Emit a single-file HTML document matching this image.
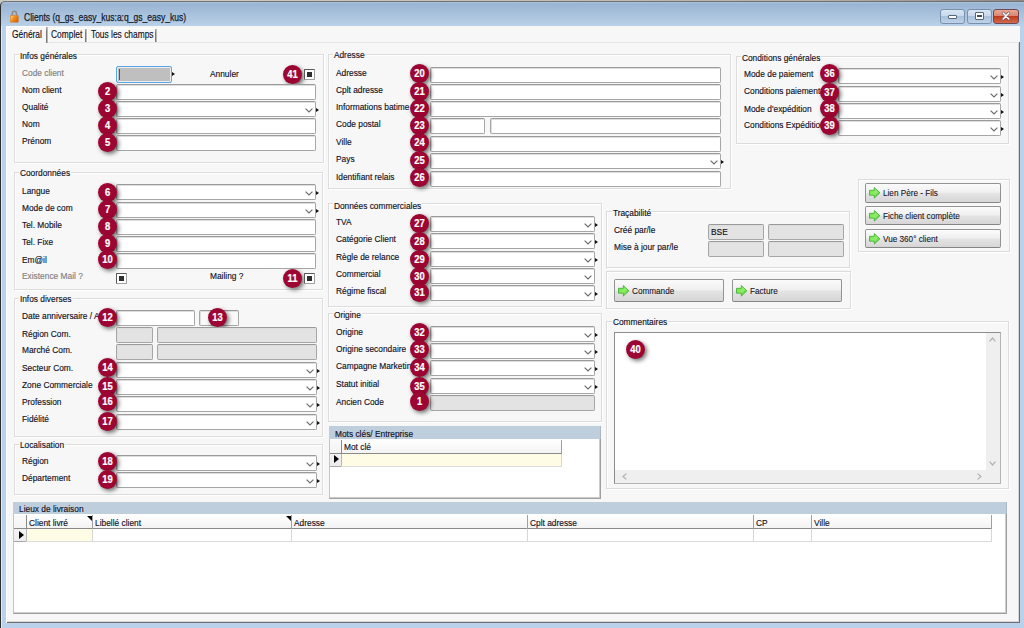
<!DOCTYPE html><html><head><meta charset="utf-8"><style>
*{margin:0;padding:0;box-sizing:border-box}
html,body{width:1024px;height:628px;overflow:hidden;background:#b9d1ea;font-family:"Liberation Sans",sans-serif}
#root{position:relative;width:1024px;height:628px;overflow:hidden}
.a{position:absolute}
.lbl,.gtit,.glbl{position:absolute;font-size:9.5px;line-height:11px;color:#101024;white-space:nowrap;transform-origin:0 0;transform:scaleX(0.88);-webkit-text-stroke:0.15px currentColor}
.gtit{background:#f7f7f7;padding:0 1px;margin-left:-1px}
.glbl{color:#7e7e7e}
.fld{position:absolute;background:#fff;border:1px solid #a6a6a6;border-top-color:#9a9a9a;border-radius:2px;box-shadow:inset 1px 1px 0 #dedede}
.fld.dis{background:#e3e3e3}
.chev{position:absolute;display:block;line-height:0}
.ptr{position:absolute;width:0;height:0;border-left:3px solid #111;border-top:2.5px solid transparent;border-bottom:2.5px solid transparent}
.bdg{position:absolute;width:19px;height:19px;border-radius:50%;background:#9d0632;box-shadow:2px 2px 4px rgba(0,0,0,.55);text-align:center}
.bdg span{display:block;font-weight:bold;font-size:10px;line-height:19px;color:#fff;transform:scaleX(0.94);-webkit-text-stroke:0.2px #fff}
.grp{position:absolute;border:1px solid #dcdcdc;box-shadow:inset 1px 1px 0 #fff, 1px 1px 0 #fff}
.chk{position:absolute;width:11px;height:10.5px;border:1px solid #5a5a5a;border-right-color:#a0a0a0;border-bottom-color:#a0a0a0;border-radius:1px;background:#fff}
.chk b{position:absolute;left:2px;top:2px;width:5px;height:5px;background:#2e2e2e}
.btn{position:absolute;border:1px solid #939393;border-bottom-color:#858585;border-radius:2px;background:linear-gradient(#fbfbfb 0%,#f0f0f0 45%,#e3e3e3 55%,#d6d6d6 100%)}
.btn .arr{position:absolute;left:3px;top:3px}
.btn span{position:absolute;left:17px;top:4px;font-size:9.5px;line-height:11px;color:#141428;white-space:nowrap;transform-origin:0 0;transform:scaleX(0.86);-webkit-text-stroke:0.1px currentColor}
.hdr{position:absolute;background:#bfcedd}
.ch{position:absolute;background:linear-gradient(#ffffff,#f3f3f3);border-bottom:1px solid #8a8a8a}
.tri{position:absolute;width:0;height:0;border-left:5px solid #000;border-top:4.5px solid transparent;border-bottom:4.5px solid transparent}
.sort{position:absolute;width:0;height:0;border-top:5px solid #000;border-left:5px solid transparent}
</style></head><body><div id="root"><div class="a" style="left:0px;top:0px;width:1024px;height:2px;background:linear-gradient(90deg,#d0d0cc,#c0c0bc 50%,#b0b0ac 80%,#8a8a8a)"></div>
<div class="a" style="left:0px;top:0px;width:6px;height:6px;background:#c8c8c4"></div>
<div class="a" style="left:0;top:1px;width:1040px;height:640px;border-top:1px solid #727272;border-left:1px solid #2e2e2e;border-top-left-radius:5px;background:linear-gradient(#aec3da 0px,#9ab5d3 2px,#b9d0e8 24px,#b9d1ea 24px)"></div>
<div class="a" style="left:1px;top:26px;width:1px;height:602px;background:#dfeaf6"></div>
<svg class="a" style="left:10px;top:10px" width="9" height="13" viewBox="0 0 9 13"><path d="M2.3 5.6 V3.4 A2.1 2.1 0 0 1 6.5 3.4 V5.6" fill="none" stroke="#8c8c8c" stroke-width="1.6"/><defs><linearGradient id="lk" x1="0" y1="0" x2="1" y2="0.6"><stop offset="0" stop-color="#f59a2a"/><stop offset="0.25" stop-color="#ffc25a"/><stop offset="0.4" stop-color="#f39a28"/><stop offset="1" stop-color="#d9650a"/></linearGradient></defs><rect x="0.3" y="5.4" width="8" height="6.8" rx="0.5" fill="url(#lk)" stroke="#d06a12" stroke-width="0.5"/></svg>
<div class="a" style="left:24px;top:11px;font-size:11px;line-height:13px;color:#141c2c;white-space:nowrap;transform-origin:0 0;transform:scaleX(0.775);-webkit-text-stroke:0.25px #141c2c">Clients (q_gs_easy_kus:a:q_gs_easy_kus)</div>
<div class="a" style="left:940px;top:9px;width:25px;height:15px;border:1px solid #7890aa;border-radius:3px;background:linear-gradient(#d8e5f3 0%,#c8d9ec 45%,#a8c1dd 50%,#bfd3ea 100%)"></div>
<div class="a" style="left:967px;top:9px;width:25px;height:15px;border:1px solid #7890aa;border-radius:3px;background:linear-gradient(#d8e5f3 0%,#c8d9ec 45%,#a8c1dd 50%,#bfd3ea 100%)"></div>
<div class="a" style="left:993px;top:9px;width:26px;height:15px;border:1px solid #6b4858;border-radius:3px;background:linear-gradient(#eaa897 0%,#dc8670 45%,#c13a1c 50%,#d36a4e 100%)"></div>
<div class="a" style="left:948px;top:15px;width:9px;height:4px;background:#fff;border:1px solid #55657a;border-radius:1px"></div>
<div class="a" style="left:975px;top:12px;width:9px;height:8px;background:#fff;border:1px solid #55657a;border-radius:1px"><div style="position:absolute;left:1px;top:2px;width:5px;height:2px;background:#3d4e66"></div></div>
<svg class="a" style="left:1000px;top:11px" width="12" height="10" viewBox="0 0 12 10"><path d="M3.2 2 L8.8 8 M8.8 2 L3.2 8" stroke="#7a5a66" stroke-width="2.8" stroke-linecap="round"/><path d="M3.2 2 L8.8 8 M8.8 2 L3.2 8" stroke="#fff" stroke-width="1.5" stroke-linecap="round"/></svg>
<div class="a" style="left:6px;top:26px;width:1014px;height:597px;background:#f7f7f7"></div>
<div class="a" style="left:48px;top:42px;width:971px;height:1px;background:#e6e6e6"></div>
<div class="a" style="left:1019px;top:42px;width:1px;height:581px;background:#6e6e6e"></div>
<div class="a" style="left:1018px;top:43px;width:1px;height:579px;background:#d6d6d6"></div>
<div class="a" style="left:6px;top:622px;width:1014px;height:1px;background:#6e6e6e"></div>
<div class="a" style="left:7px;top:621px;width:1012px;height:1px;background:#d6d6d6"></div>
<div class="a" style="left:6px;top:26px;width:1px;height:597px;background:#fff"></div>
<div class="a" style="left:6px;top:26px;width:41px;height:1px;background:#fff"></div>
<div class="a" style="left:46px;top:27px;width:1px;height:16px;background:linear-gradient(#b0b0b0,#7a7a7a 30%,#7a7a7a)"></div>
<div class="a" style="left:47px;top:27px;width:1px;height:16px;background:#b8b8b8"></div>
<div class="a" style="left:48px;top:28px;width:1px;height:14px;background:#fff"></div>
<div class="a" style="left:48px;top:28px;width:108px;height:1px;background:#fff"></div>
<div class="a" style="left:85px;top:29px;width:1px;height:13px;background:linear-gradient(#b0b0b0,#7a7a7a 30%,#7a7a7a)"></div>
<div class="a" style="left:86px;top:29px;width:1px;height:13px;background:#b8b8b8"></div>
<div class="a" style="left:87px;top:29px;width:1px;height:13px;background:#fff"></div>
<div class="a" style="left:155px;top:29px;width:1px;height:13px;background:linear-gradient(#b0b0b0,#7a7a7a 30%,#7a7a7a)"></div>
<div class="a" style="left:156px;top:29px;width:1px;height:13px;background:#b8b8b8"></div>
<div class="lbl" style="left:12px;top:29px;font-size:10px;transform:scaleX(0.84)">Général</div>
<div class="lbl" style="left:51px;top:29px;font-size:10px;transform:scaleX(0.84)">Complet</div>
<div class="lbl" style="left:91px;top:29px;font-size:10px;transform:scaleX(0.84)">Tous les champs</div>
<div class="grp" style="left:14px;top:54px;width:310px;height:109px"></div>
<div class="gtit" style="left:20px;top:50px;">Infos générales</div>
<div class="glbl" style="left:22px;top:67px;">Code client</div>
<div class="a" style="left:116px;top:66px;width:56px;height:17px;border:1px solid #5aa8e8;border-radius:2px;background:#bfbfbf;box-shadow:inset 0 0 0 1px #ececec"><div style="position:absolute;left:2px;top:2px;width:1px;height:11px;background:#555"></div></div>
<div class="ptr" style="left:172px;top:72px"></div>
<div class="lbl" style="left:210px;top:68px;">Annuler</div>
<div class="bdg" style="left:282.7px;top:64.7px"><span>41</span></div>
<div class="chk" style="left:304px;top:69px"><b></b></div>
<div class="lbl" style="left:22px;top:84px;">Nom client</div>
<div class="fld" style="left:116px;top:84px;width:200px;height:16px;"></div>
<div class="bdg" style="left:97.8px;top:82.3px"><span>2</span></div>
<div class="lbl" style="left:22px;top:101px;">Qualité</div>
<div class="fld" style="left:116px;top:101px;width:200px;height:16px"><i class="chev" style="left:187.5px;top:5.5px"><svg width="8" height="5" viewBox="0 0 8 5"><path d="M0.6 0.6 L4 4 L7.4 0.6" fill="none" stroke="#6a6a6a" stroke-width="1.15"/></svg></i></div>
<div class="ptr" style="left:316px;top:107.5px"></div>
<div class="bdg" style="left:97.8px;top:99.2px"><span>3</span></div>
<div class="lbl" style="left:22px;top:118px;">Nom</div>
<div class="fld" style="left:116px;top:118px;width:200px;height:16px;"></div>
<div class="bdg" style="left:97.8px;top:116.2px"><span>4</span></div>
<div class="lbl" style="left:22px;top:135px;">Prénom</div>
<div class="fld" style="left:116px;top:135px;width:200px;height:16px;"></div>
<div class="bdg" style="left:97.8px;top:133.3px"><span>5</span></div>
<div class="grp" style="left:14px;top:172px;width:309px;height:118px"></div>
<div class="gtit" style="left:20px;top:167px;">Coordonnées</div>
<div class="lbl" style="left:22px;top:185px;">Langue</div>
<div class="fld" style="left:116px;top:184px;width:200px;height:16px"><i class="chev" style="left:187.5px;top:5.5px"><svg width="8" height="5" viewBox="0 0 8 5"><path d="M0.6 0.6 L4 4 L7.4 0.6" fill="none" stroke="#6a6a6a" stroke-width="1.15"/></svg></i></div>
<div class="ptr" style="left:316px;top:190.5px"></div>
<div class="bdg" style="left:97.8px;top:182.5px"><span>6</span></div>
<div class="lbl" style="left:22px;top:202px;">Mode de com</div>
<div class="fld" style="left:116px;top:202px;width:200px;height:16px"><i class="chev" style="left:187.5px;top:5.5px"><svg width="8" height="5" viewBox="0 0 8 5"><path d="M0.6 0.6 L4 4 L7.4 0.6" fill="none" stroke="#6a6a6a" stroke-width="1.15"/></svg></i></div>
<div class="ptr" style="left:316px;top:208.5px"></div>
<div class="bdg" style="left:97.8px;top:200px"><span>7</span></div>
<div class="lbl" style="left:22px;top:219px;">Tel. Mobile</div>
<div class="fld" style="left:116px;top:219px;width:200px;height:16px;"></div>
<div class="bdg" style="left:97.8px;top:217px"><span>8</span></div>
<div class="lbl" style="left:22px;top:236px;">Tel. Fixe</div>
<div class="fld" style="left:116px;top:236px;width:200px;height:16px;"></div>
<div class="bdg" style="left:97.8px;top:233.5px"><span>9</span></div>
<div class="lbl" style="left:22px;top:254px;">Em@il</div>
<div class="fld" style="left:116px;top:253px;width:200px;height:16px;"></div>
<div class="bdg" style="left:97.8px;top:250.3px"><span>10</span></div>
<div class="glbl" style="left:22px;top:270px;">Existence Mail ?</div>
<div class="chk" style="left:116px;top:273px"><b></b></div>
<div class="lbl" style="left:210px;top:270px;">Mailing ?</div>
<div class="bdg" style="left:282.7px;top:268.7px"><span>11</span></div>
<div class="chk" style="left:304px;top:273px"><b></b></div>
<div class="grp" style="left:14px;top:298px;width:309px;height:139px"></div>
<div class="gtit" style="left:20px;top:293px;">Infos diverses</div>
<div class="lbl" style="left:22px;top:310px;">Date anniversaire / A</div>
<div class="fld" style="left:116px;top:310px;width:79px;height:16px;"></div>
<div class="fld" style="left:199px;top:310px;width:40px;height:16px;background:#f9f9f9"></div>
<div class="bdg" style="left:97.8px;top:307.7px"><span>12</span></div>
<div class="bdg" style="left:207.5px;top:307.7px"><span>13</span></div>
<div class="lbl" style="left:22px;top:328px;">Région Com.</div>
<div class="fld dis" style="left:116px;top:327px;width:37px;height:16px;"></div>
<div class="fld dis" style="left:157px;top:327px;width:160px;height:16px;"></div>
<div class="lbl" style="left:22px;top:344px;">Marché Com.</div>
<div class="fld dis" style="left:116px;top:344px;width:37px;height:16px;"></div>
<div class="fld dis" style="left:157px;top:344px;width:160px;height:16px;"></div>
<div class="lbl" style="left:22px;top:362px;">Secteur Com.</div>
<div class="fld" style="left:116px;top:362px;width:201px;height:16px"><i class="chev" style="left:188.5px;top:5.5px"><svg width="8" height="5" viewBox="0 0 8 5"><path d="M0.6 0.6 L4 4 L7.4 0.6" fill="none" stroke="#6a6a6a" stroke-width="1.15"/></svg></i></div>
<div class="ptr" style="left:317px;top:368.5px"></div>
<div class="bdg" style="left:97.8px;top:358.3px"><span>14</span></div>
<div class="lbl" style="left:22px;top:379px;">Zone Commerciale</div>
<div class="fld" style="left:116px;top:379px;width:201px;height:16px"><i class="chev" style="left:188.5px;top:5.5px"><svg width="8" height="5" viewBox="0 0 8 5"><path d="M0.6 0.6 L4 4 L7.4 0.6" fill="none" stroke="#6a6a6a" stroke-width="1.15"/></svg></i></div>
<div class="ptr" style="left:317px;top:385.5px"></div>
<div class="bdg" style="left:97.8px;top:377px"><span>15</span></div>
<div class="lbl" style="left:22px;top:396px;">Profession</div>
<div class="fld" style="left:116px;top:396px;width:201px;height:16px"><i class="chev" style="left:188.5px;top:5.5px"><svg width="8" height="5" viewBox="0 0 8 5"><path d="M0.6 0.6 L4 4 L7.4 0.6" fill="none" stroke="#6a6a6a" stroke-width="1.15"/></svg></i></div>
<div class="ptr" style="left:317px;top:402.5px"></div>
<div class="bdg" style="left:97.8px;top:392.1px"><span>16</span></div>
<div class="lbl" style="left:22px;top:413px;">Fidélité</div>
<div class="fld" style="left:116px;top:414px;width:201px;height:16px"><i class="chev" style="left:188.5px;top:5.5px"><svg width="8" height="5" viewBox="0 0 8 5"><path d="M0.6 0.6 L4 4 L7.4 0.6" fill="none" stroke="#6a6a6a" stroke-width="1.15"/></svg></i></div>
<div class="ptr" style="left:317px;top:420.5px"></div>
<div class="bdg" style="left:97.8px;top:412px"><span>17</span></div>
<div class="grp" style="left:14px;top:444px;width:309px;height:51px"></div>
<div class="gtit" style="left:20px;top:439px;">Localisation</div>
<div class="lbl" style="left:22px;top:455px;">Région</div>
<div class="fld" style="left:116px;top:455px;width:201px;height:16px"><i class="chev" style="left:188.5px;top:5.5px"><svg width="8" height="5" viewBox="0 0 8 5"><path d="M0.6 0.6 L4 4 L7.4 0.6" fill="none" stroke="#6a6a6a" stroke-width="1.15"/></svg></i></div>
<div class="ptr" style="left:317px;top:461.5px"></div>
<div class="bdg" style="left:97.8px;top:452.1px"><span>18</span></div>
<div class="lbl" style="left:22px;top:472px;">Département</div>
<div class="fld" style="left:116px;top:472px;width:201px;height:16px"><i class="chev" style="left:188.5px;top:5.5px"><svg width="8" height="5" viewBox="0 0 8 5"><path d="M0.6 0.6 L4 4 L7.4 0.6" fill="none" stroke="#6a6a6a" stroke-width="1.15"/></svg></i></div>
<div class="ptr" style="left:317px;top:478.5px"></div>
<div class="bdg" style="left:97.8px;top:469.5px"><span>19</span></div>
<div class="grp" style="left:328px;top:54px;width:403px;height:135px"></div>
<div class="gtit" style="left:334px;top:49px;">Adresse</div>
<div class="lbl" style="left:335.5px;top:67px;">Adresse</div>
<div class="fld" style="left:430px;top:67px;width:291px;height:16px;"></div>
<div class="bdg" style="left:410px;top:64.3px"><span>20</span></div>
<div class="lbl" style="left:335.5px;top:84px;">Cplt adresse</div>
<div class="fld" style="left:430px;top:84px;width:291px;height:16px;"></div>
<div class="bdg" style="left:410px;top:82.3px"><span>21</span></div>
<div class="lbl" style="left:335.5px;top:101px;">Informations batime</div>
<div class="fld" style="left:430px;top:101px;width:291px;height:16px;"></div>
<div class="bdg" style="left:410px;top:98.8px"><span>22</span></div>
<div class="lbl" style="left:335.5px;top:118px;">Code postal</div>
<div class="fld" style="left:430px;top:118px;width:55px;height:16px;"></div>
<div class="fld" style="left:490px;top:118px;width:231px;height:16px;"></div>
<div class="bdg" style="left:410px;top:115.5px"><span>23</span></div>
<div class="lbl" style="left:335.5px;top:136px;">Ville</div>
<div class="fld" style="left:430px;top:136px;width:291px;height:16px;"></div>
<div class="bdg" style="left:410px;top:133px"><span>24</span></div>
<div class="lbl" style="left:335.5px;top:153px;">Pays</div>
<div class="fld" style="left:430px;top:153px;width:291px;height:16px"><i class="chev" style="left:278.5px;top:5.5px"><svg width="8" height="5" viewBox="0 0 8 5"><path d="M0.6 0.6 L4 4 L7.4 0.6" fill="none" stroke="#6a6a6a" stroke-width="1.15"/></svg></i></div>
<div class="ptr" style="left:721px;top:159.5px"></div>
<div class="bdg" style="left:410px;top:151.3px"><span>25</span></div>
<div class="lbl" style="left:335.5px;top:171px;">Identifiant relais</div>
<div class="fld" style="left:430px;top:171px;width:291px;height:16px;"></div>
<div class="bdg" style="left:410px;top:167.5px"><span>26</span></div>
<div class="grp" style="left:328px;top:203px;width:274px;height:104px"></div>
<div class="gtit" style="left:334px;top:200px;">Données commerciales</div>
<div class="lbl" style="left:335.5px;top:216px;">TVA</div>
<div class="fld" style="left:430px;top:216px;width:165px;height:16px"><i class="chev" style="left:152.5px;top:5.5px"><svg width="8" height="5" viewBox="0 0 8 5"><path d="M0.6 0.6 L4 4 L7.4 0.6" fill="none" stroke="#6a6a6a" stroke-width="1.15"/></svg></i></div>
<div class="ptr" style="left:595px;top:222.5px"></div>
<div class="bdg" style="left:410px;top:213.5px"><span>27</span></div>
<div class="lbl" style="left:335.5px;top:233px;">Catégorie Client</div>
<div class="fld" style="left:430px;top:233px;width:165px;height:16px"><i class="chev" style="left:152.5px;top:5.5px"><svg width="8" height="5" viewBox="0 0 8 5"><path d="M0.6 0.6 L4 4 L7.4 0.6" fill="none" stroke="#6a6a6a" stroke-width="1.15"/></svg></i></div>
<div class="ptr" style="left:595px;top:239.5px"></div>
<div class="bdg" style="left:410px;top:232px"><span>28</span></div>
<div class="lbl" style="left:335.5px;top:251px;">Règle de relance</div>
<div class="fld" style="left:430px;top:251px;width:165px;height:16px"><i class="chev" style="left:152.5px;top:5.5px"><svg width="8" height="5" viewBox="0 0 8 5"><path d="M0.6 0.6 L4 4 L7.4 0.6" fill="none" stroke="#6a6a6a" stroke-width="1.15"/></svg></i></div>
<div class="ptr" style="left:595px;top:257.5px"></div>
<div class="bdg" style="left:410px;top:249.5px"><span>29</span></div>
<div class="lbl" style="left:335.5px;top:268px;">Commercial</div>
<div class="fld" style="left:430px;top:268px;width:165px;height:16px"><i class="chev" style="left:152.5px;top:5.5px"><svg width="8" height="5" viewBox="0 0 8 5"><path d="M0.6 0.6 L4 4 L7.4 0.6" fill="none" stroke="#6a6a6a" stroke-width="1.15"/></svg></i></div>
<div class="bdg" style="left:410px;top:267px"><span>30</span></div>
<div class="lbl" style="left:335.5px;top:285px;">Régime fiscal</div>
<div class="fld" style="left:430px;top:285px;width:165px;height:16px"><i class="chev" style="left:152.5px;top:5.5px"><svg width="8" height="5" viewBox="0 0 8 5"><path d="M0.6 0.6 L4 4 L7.4 0.6" fill="none" stroke="#6a6a6a" stroke-width="1.15"/></svg></i></div>
<div class="ptr" style="left:595px;top:291.5px"></div>
<div class="bdg" style="left:410px;top:283px"><span>31</span></div>
<div class="grp" style="left:328px;top:313px;width:274px;height:109px"></div>
<div class="gtit" style="left:334px;top:309px;">Origine</div>
<div class="lbl" style="left:335.5px;top:326px;">Origine</div>
<div class="fld" style="left:430px;top:326px;width:165px;height:16px"><i class="chev" style="left:152.5px;top:5.5px"><svg width="8" height="5" viewBox="0 0 8 5"><path d="M0.6 0.6 L4 4 L7.4 0.6" fill="none" stroke="#6a6a6a" stroke-width="1.15"/></svg></i></div>
<div class="ptr" style="left:595px;top:332.5px"></div>
<div class="bdg" style="left:410px;top:323.3px"><span>32</span></div>
<div class="lbl" style="left:335.5px;top:343px;">Origine secondaire</div>
<div class="fld" style="left:430px;top:343px;width:165px;height:16px"><i class="chev" style="left:152.5px;top:5.5px"><svg width="8" height="5" viewBox="0 0 8 5"><path d="M0.6 0.6 L4 4 L7.4 0.6" fill="none" stroke="#6a6a6a" stroke-width="1.15"/></svg></i></div>
<div class="ptr" style="left:595px;top:349.5px"></div>
<div class="bdg" style="left:410px;top:339.7px"><span>33</span></div>
<div class="lbl" style="left:335.5px;top:360px;">Campagne Marketin</div>
<div class="fld" style="left:430px;top:360px;width:165px;height:16px"><i class="chev" style="left:152.5px;top:5.5px"><svg width="8" height="5" viewBox="0 0 8 5"><path d="M0.6 0.6 L4 4 L7.4 0.6" fill="none" stroke="#6a6a6a" stroke-width="1.15"/></svg></i></div>
<div class="ptr" style="left:595px;top:366.5px"></div>
<div class="bdg" style="left:410px;top:358.1px"><span>34</span></div>
<div class="lbl" style="left:335.5px;top:378px;">Statut initial</div>
<div class="fld" style="left:430px;top:378px;width:165px;height:16px"><i class="chev" style="left:152.5px;top:5.5px"><svg width="8" height="5" viewBox="0 0 8 5"><path d="M0.6 0.6 L4 4 L7.4 0.6" fill="none" stroke="#6a6a6a" stroke-width="1.15"/></svg></i></div>
<div class="ptr" style="left:595px;top:384.5px"></div>
<div class="bdg" style="left:410px;top:376.9px"><span>35</span></div>
<div class="lbl" style="left:335.5px;top:396px;">Ancien Code</div>
<div class="fld dis" style="left:430px;top:395px;width:165px;height:16px;"></div>
<div class="bdg" style="left:410px;top:392.1px"><span>1</span></div>
<div class="hdr" style="left:329px;top:426px;width:272px;height:13px"></div>
<div class="lbl" style="left:334.5px;top:428px;">Mots clés/ Entreprise</div>
<div class="a" style="left:329px;top:439px;width:272px;height:60px;background:#fff;border:1px solid #c4c4c4;border-top:none;border-right-color:#a0a0a0;border-bottom-color:#a0a0a0;box-shadow:inset -1px -1px 0 #cdcdcd"></div>
<div class="a" style="left:600px;top:426px;width:1px;height:13px;background:#a9b6c4"></div>
<div class="ch" style="left:330px;top:440px;width:232px;height:14px"></div>
<div class="a" style="left:330px;top:440px;width:11px;height:26px;background:linear-gradient(#fafafa,#ececec)"></div>
<div class="a" style="left:330px;top:453px;width:11px;height:1px;background:#8a8a8a"></div>
<div class="a" style="left:341px;top:440px;width:1px;height:14px;background:#8a8a8a"></div>
<div class="a" style="left:341px;top:454px;width:1px;height:12px;background:#b8b8b8"></div>
<div class="a" style="left:561px;top:440px;width:1px;height:14px;background:#a0a0a0"></div>
<div class="a" style="left:561px;top:454px;width:1px;height:13px;background:#d6d6d6"></div>
<div class="lbl" style="left:344px;top:441px;">Mot clé</div>
<div class="a" style="left:342px;top:454px;width:219px;height:12px;background:#fefce4"></div>
<div class="a" style="left:330px;top:466px;width:232px;height:1px;background:#dcdcdc"></div>
<div class="a" style="left:330px;top:466px;width:11px;height:1px;background:#a8a8a8"></div>
<div class="tri" style="left:334px;top:455px"></div>
<div class="grp" style="left:606px;top:211px;width:244px;height:57px"></div>
<div class="gtit" style="left:613px;top:207px;">Traçabilité</div>
<div class="lbl" style="left:614px;top:224px;">Créé par/le</div>
<div class="fld dis" style="left:708px;top:224px;width:56px;height:16px;"></div>
<div class="fld dis" style="left:768px;top:224px;width:76px;height:16px;"></div>
<div class="lbl" style="left:711.2px;top:226px;">BSE</div>
<div class="lbl" style="left:614px;top:241px;">Mise à jour par/le</div>
<div class="fld dis" style="left:708px;top:241px;width:56px;height:16px;"></div>
<div class="fld dis" style="left:768px;top:241px;width:76px;height:16px;"></div>
<div class="grp" style="left:606px;top:271px;width:245px;height:38px"></div>
<div class="btn" style="left:614px;top:279px;width:110px;height:23px"><svg class="arr" style="top:5px" width="12" height="12" viewBox="0 0 12 12"><defs><linearGradient id="ga" x1="0" y1="0" x2="1" y2="1"><stop offset="0" stop-color="#6fdc4a"/><stop offset="0.55" stop-color="#8cf066"/><stop offset="1" stop-color="#34b024"/></linearGradient></defs><path d="M0.5 3.3 H5.3 V0.5 L10.9 5.8 L5.3 11.1 V8.2 H0.5 Z" fill="url(#ga)" stroke="#2ca41c" stroke-width="0.7" stroke-linejoin="round"/></svg><span style="top:4.5px">Commande</span></div>
<div class="btn" style="left:732px;top:279px;width:110px;height:23px"><svg class="arr" style="top:5px" width="12" height="12" viewBox="0 0 12 12"><defs><linearGradient id="ga" x1="0" y1="0" x2="1" y2="1"><stop offset="0" stop-color="#6fdc4a"/><stop offset="0.55" stop-color="#8cf066"/><stop offset="1" stop-color="#34b024"/></linearGradient></defs><path d="M0.5 3.3 H5.3 V0.5 L10.9 5.8 L5.3 11.1 V8.2 H0.5 Z" fill="url(#ga)" stroke="#2ca41c" stroke-width="0.7" stroke-linejoin="round"/></svg><span style="top:4.5px">Facture</span></div>
<div class="grp" style="left:858px;top:179px;width:152px;height:73px"></div>
<div class="btn" style="left:865px;top:183px;width:136px;height:20px"><svg class="arr" style="top:3px" width="12" height="12" viewBox="0 0 12 12"><defs><linearGradient id="ga" x1="0" y1="0" x2="1" y2="1"><stop offset="0" stop-color="#6fdc4a"/><stop offset="0.55" stop-color="#8cf066"/><stop offset="1" stop-color="#34b024"/></linearGradient></defs><path d="M0.5 3.3 H5.3 V0.5 L10.9 5.8 L5.3 11.1 V8.2 H0.5 Z" fill="url(#ga)" stroke="#2ca41c" stroke-width="0.7" stroke-linejoin="round"/></svg><span style="top:3px">Lien Père - Fils</span></div>
<div class="btn" style="left:865px;top:206px;width:136px;height:19px"><svg class="arr" style="top:3px" width="12" height="12" viewBox="0 0 12 12"><defs><linearGradient id="ga" x1="0" y1="0" x2="1" y2="1"><stop offset="0" stop-color="#6fdc4a"/><stop offset="0.55" stop-color="#8cf066"/><stop offset="1" stop-color="#34b024"/></linearGradient></defs><path d="M0.5 3.3 H5.3 V0.5 L10.9 5.8 L5.3 11.1 V8.2 H0.5 Z" fill="url(#ga)" stroke="#2ca41c" stroke-width="0.7" stroke-linejoin="round"/></svg><span style="top:3px">Fiche client complète</span></div>
<div class="btn" style="left:865px;top:229px;width:136px;height:19px"><svg class="arr" style="top:3px" width="12" height="12" viewBox="0 0 12 12"><defs><linearGradient id="ga" x1="0" y1="0" x2="1" y2="1"><stop offset="0" stop-color="#6fdc4a"/><stop offset="0.55" stop-color="#8cf066"/><stop offset="1" stop-color="#34b024"/></linearGradient></defs><path d="M0.5 3.3 H5.3 V0.5 L10.9 5.8 L5.3 11.1 V8.2 H0.5 Z" fill="url(#ga)" stroke="#2ca41c" stroke-width="0.7" stroke-linejoin="round"/></svg><span style="top:3px">Vue 360° client</span></div>
<div class="grp" style="left:736px;top:56px;width:273px;height:88px"></div>
<div class="gtit" style="left:742px;top:52px;">Conditions générales</div>
<div class="lbl" style="left:743.8px;top:68px;">Mode de paiement</div>
<div class="fld" style="left:838px;top:68px;width:163px;height:16px"><i class="chev" style="left:150.5px;top:5.5px"><svg width="8" height="5" viewBox="0 0 8 5"><path d="M0.6 0.6 L4 4 L7.4 0.6" fill="none" stroke="#6a6a6a" stroke-width="1.15"/></svg></i></div>
<div class="ptr" style="left:1001px;top:74.5px"></div>
<div class="bdg" style="left:819.5px;top:64.4px"><span>36</span></div>
<div class="lbl" style="left:743.8px;top:85px;">Conditions paiement</div>
<div class="fld" style="left:838px;top:86px;width:163px;height:16px"><i class="chev" style="left:150.5px;top:5.5px"><svg width="8" height="5" viewBox="0 0 8 5"><path d="M0.6 0.6 L4 4 L7.4 0.6" fill="none" stroke="#6a6a6a" stroke-width="1.15"/></svg></i></div>
<div class="ptr" style="left:1001px;top:92.5px"></div>
<div class="bdg" style="left:819.5px;top:82.8px"><span>37</span></div>
<div class="lbl" style="left:743.8px;top:103px;">Mode d'expédition</div>
<div class="fld" style="left:838px;top:103px;width:163px;height:16px"><i class="chev" style="left:150.5px;top:5.5px"><svg width="8" height="5" viewBox="0 0 8 5"><path d="M0.6 0.6 L4 4 L7.4 0.6" fill="none" stroke="#6a6a6a" stroke-width="1.15"/></svg></i></div>
<div class="ptr" style="left:1001px;top:109.5px"></div>
<div class="bdg" style="left:819.5px;top:99.1px"><span>38</span></div>
<div class="lbl" style="left:743.8px;top:119px;">Conditions Expédition</div>
<div class="fld" style="left:838px;top:120px;width:163px;height:16px"><i class="chev" style="left:150.5px;top:5.5px"><svg width="8" height="5" viewBox="0 0 8 5"><path d="M0.6 0.6 L4 4 L7.4 0.6" fill="none" stroke="#6a6a6a" stroke-width="1.15"/></svg></i></div>
<div class="ptr" style="left:1001px;top:126.5px"></div>
<div class="bdg" style="left:819.5px;top:116.1px"><span>39</span></div>
<div class="grp" style="left:606px;top:321px;width:403px;height:168px"></div>
<div class="gtit" style="left:612.7px;top:316px;">Commentaires</div>
<div class="a" style="left:614px;top:332px;width:387px;height:152px;background:#fff;border:1px solid #8c8c8c;border-right-color:#b4b4b4;border-bottom-color:#b4b4b4"></div>
<div class="a" style="left:986px;top:333px;width:14px;height:150px;background:#efefef"></div>
<div class="a" style="left:615px;top:470px;width:385px;height:13px;background:#efefef"></div>
<svg class="a" style="left:989px;top:337px" width="7" height="5" viewBox="0 0 7 5"><path d="M0.6 4.4 L3.5 1 L6.4 4.4" fill="none" stroke="#b0b0b0" stroke-width="1.2"/></svg>
<svg class="a" style="left:989px;top:460.5px" width="7" height="5" viewBox="0 0 7 5"><path d="M0.6 0.6 L3.5 4 L6.4 0.6" fill="none" stroke="#b0b0b0" stroke-width="1.2"/></svg>
<svg class="a" style="left:977px;top:473px" width="5" height="7" viewBox="0 0 5 7"><path d="M0.6 0.6 L4 3.5 L0.6 6.4" fill="none" stroke="#b0b0b0" stroke-width="1.2"/></svg>
<svg class="a" style="left:622px;top:473px" width="5" height="7" viewBox="0 0 5 7"><path d="M4.4 0.6 L1 3.5 L4.4 6.4" fill="none" stroke="#b0b0b0" stroke-width="1.2"/></svg>
<div class="bdg" style="left:625.5px;top:340px"><span>40</span></div>
<div class="hdr" style="left:13px;top:502px;width:994px;height:12px"></div>
<div class="lbl" style="left:19px;top:503px;">Lieux de livraison</div>
<div class="a" style="left:13px;top:514px;width:994px;height:100px;background:#fff;border:1px solid #c4c4c4;border-top:none;border-right-color:#a0a0a0;border-bottom-color:#a0a0a0;box-shadow:inset -1px -1px 0 #cdcdcd"></div>
<div class="a" style="left:1006px;top:502px;width:1px;height:12px;background:#a9b6c4"></div>
<div class="ch" style="left:14px;top:515px;width:978px;height:14px"></div>
<div class="a" style="left:14px;top:515px;width:12px;height:27px;background:linear-gradient(#fafafa,#ececec)"></div>
<div class="a" style="left:14px;top:528px;width:12px;height:1px;background:#8a8a8a"></div>
<div class="a" style="left:92px;top:515px;width:1px;height:14px;background:#a0a0a0"></div>
<div class="a" style="left:92px;top:529px;width:1px;height:13px;background:#d6d6d6"></div>
<div class="lbl" style="left:28.8px;top:517px;">Client livré</div>
<div class="a" style="left:291px;top:515px;width:1px;height:14px;background:#a0a0a0"></div>
<div class="a" style="left:291px;top:529px;width:1px;height:13px;background:#d6d6d6"></div>
<div class="lbl" style="left:94.8px;top:517px;">Libellé client</div>
<div class="a" style="left:527px;top:515px;width:1px;height:14px;background:#a0a0a0"></div>
<div class="a" style="left:527px;top:529px;width:1px;height:13px;background:#d6d6d6"></div>
<div class="lbl" style="left:293.8px;top:517px;">Adresse</div>
<div class="a" style="left:753px;top:515px;width:1px;height:14px;background:#a0a0a0"></div>
<div class="a" style="left:753px;top:529px;width:1px;height:13px;background:#d6d6d6"></div>
<div class="lbl" style="left:529.8px;top:517px;">Cplt adresse</div>
<div class="a" style="left:811px;top:515px;width:1px;height:14px;background:#a0a0a0"></div>
<div class="a" style="left:811px;top:529px;width:1px;height:13px;background:#d6d6d6"></div>
<div class="lbl" style="left:755.8px;top:517px;">CP</div>
<div class="a" style="left:991px;top:515px;width:1px;height:14px;background:#a0a0a0"></div>
<div class="a" style="left:991px;top:529px;width:1px;height:13px;background:#d6d6d6"></div>
<div class="lbl" style="left:813.8px;top:517px;">Ville</div>
<div class="a" style="left:26px;top:515px;width:1px;height:14px;background:#8a8a8a"></div>
<div class="a" style="left:26px;top:529px;width:1px;height:13px;background:#b8b8b8"></div>
<div class="a" style="left:27px;top:529px;width:65px;height:12px;background:#fefce4"></div>
<div class="a" style="left:14px;top:541px;width:978px;height:1px;background:#dcdcdc"></div>
<div class="a" style="left:14px;top:541px;width:12px;height:1px;background:#a8a8a8"></div>
<div class="tri" style="left:19px;top:530.5px"></div>
<div class="sort" style="left:87px;top:516px"></div>
<div class="sort" style="left:286px;top:516px"></div></div></body></html>
